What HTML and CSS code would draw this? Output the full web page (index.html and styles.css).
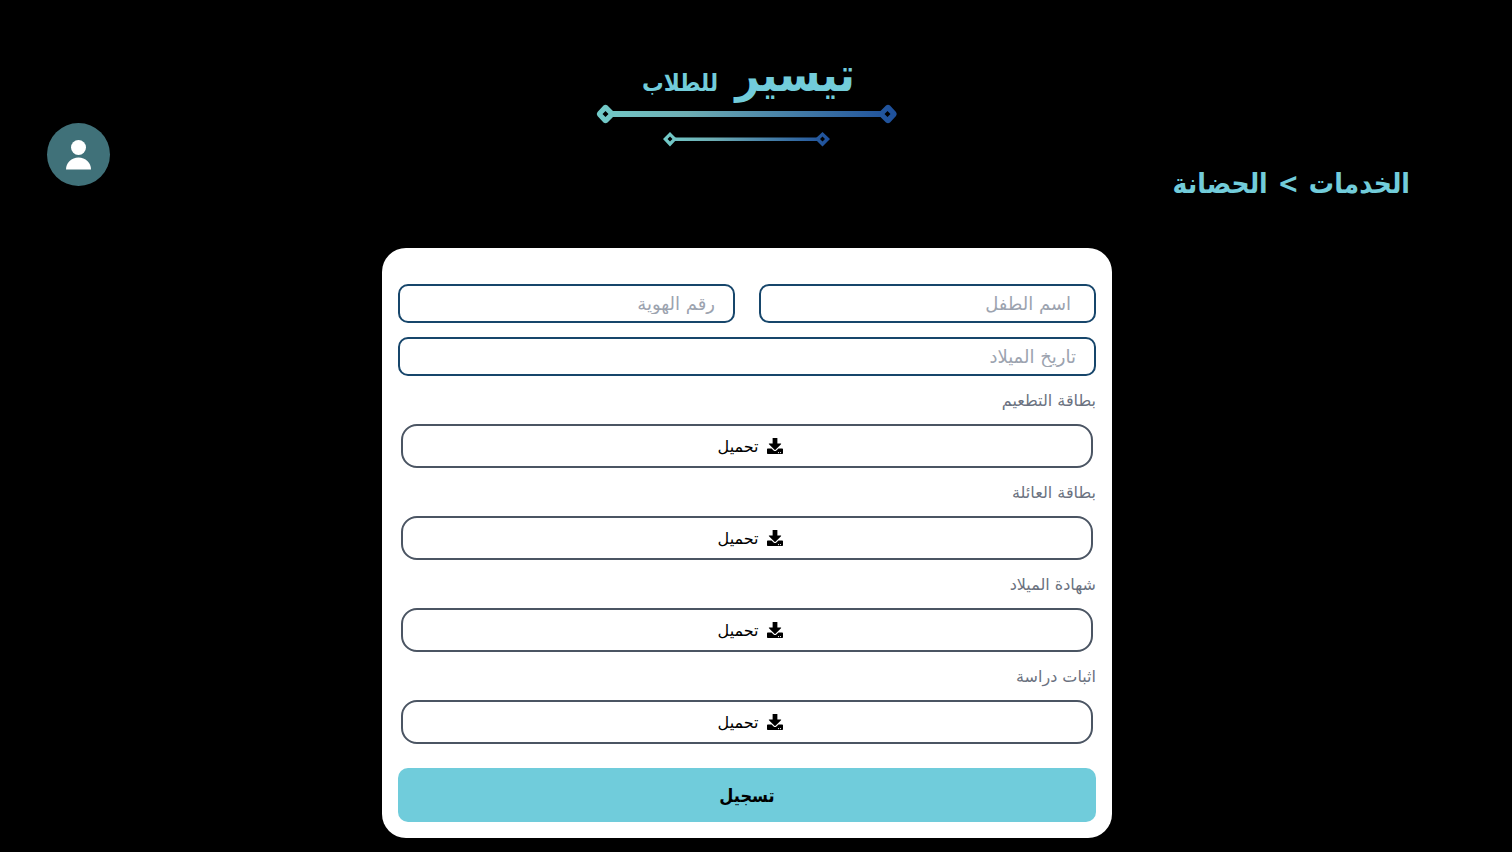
FILE: index.html
```
<!DOCTYPE html>
<html lang="ar" dir="rtl">
<head>
<meta charset="utf-8">
<meta name="viewport" content="width=device-width, initial-scale=1">
<title>الحضانة</title>
<link rel="stylesheet" href="styles.css">
</head>
<body>
<div class="page">
  <header class="header">
    <nav class="breadcrumb" aria-label="المسار">
      <a href="#services">الخدمات</a>
      <span>&gt;</span>
      <a href="#nursery">الحضانة</a>
    </nav>
    <svg class="logo" viewBox="-3 0 320 130" role="img" aria-label="تيسير للطلاب">
      <defs>
        <linearGradient id="line" gradientUnits="userSpaceOnUse" x1="7" y1="0" x2="307" y2="0">
          <stop offset="0" stop-color="#72cbc9"/>
          <stop offset="0.3" stop-color="#6dadb3"/>
          <stop offset="1" stop-color="#1d4f9b"/>
        </linearGradient>
        <linearGradient id="short-line" gradientUnits="userSpaceOnUse" x1="73" y1="0" x2="240" y2="0">
          <stop offset="0" stop-color="#72cbc9"/>
          <stop offset="0.3" stop-color="#6dadb3"/>
          <stop offset="1" stop-color="#1d4f9b"/>
        </linearGradient>
      </defs>
      <text class="logo-main" x="205" y="61" text-anchor="middle">تيسير</text>
      <text class="logo-sub" x="90" y="61" text-anchor="middle">للطلاب</text>
      <g fill="url(#line)">
        <path d="M22 81H291V87H22z"/>
        <path fill-rule="evenodd" d="M13.500 75.500Q15.500 74 17.500 75.500L24 82Q25.500 84 24 86L17.500 92.500Q15.500 94 13.500 92.500L7.500 86Q6 84 7.500 82zM15.500 81L12.500 84L15.500 87L18.500 84z"/>
        <path fill-rule="evenodd" d="M296 75.500Q298 74 300 75.500L306 82Q307.500 84 306 86L300 92.500Q298 94 296 92.500L289.500 86Q288 84 289.500 82zM297.500 81L294.500 84L297.500 87L300.500 84z"/>
      </g>
      <g fill="url(#short-line)">
        <path d="M85 107.500H227V111H85z"/>
        <path fill-rule="evenodd" d="M80 102L87 109L80 116.500L73 109zM80 106.500L77.500 109L80 111.500L82.500 109z"/>
        <path fill-rule="evenodd" d="M232.500 102L240 109L232.500 116.500L225 109zM232.500 106.500L230 109L232.500 111.500L235 109z"/>
      </g>
    </svg>
    <button class="avatar" type="button" aria-label="الحساب">
      <svg viewBox="0 0 26 30" aria-hidden="true"><circle cx="12.500" cy="7.500" r="7.500"/><path d="M0 29.500C0 22.500 5.500 17.500 12.500 17.500S25 22.500 25 29.500z"/></svg>
    </button>
  </header>
  <main>
    <form class="card">
      <div class="fields">
        <input class="field field-name" type="text" placeholder="اسم الطفل" aria-label="اسم الطفل">
        <input class="field" type="text" placeholder="رقم الهوية" aria-label="رقم الهوية">
        <input class="field field-wide" type="text" placeholder="تاريخ الميلاد" aria-label="تاريخ الميلاد">
      </div>
      <div class="upload">
        <label for="vaccine">بطاقة التطعيم</label>
        <button class="upload-button" id="vaccine" type="button"><svg class="icon" viewBox="0 0 512 512" aria-hidden="true"><use href="#download"/></svg>تحميل</button>
      </div>
      <div class="upload">
        <label for="family">بطاقة العائلة</label>
        <button class="upload-button" id="family" type="button"><svg class="icon" viewBox="0 0 512 512" aria-hidden="true"><use href="#download"/></svg>تحميل</button>
      </div>
      <div class="upload">
        <label for="birth">شهادة الميلاد</label>
        <button class="upload-button" id="birth" type="button"><svg class="icon" viewBox="0 0 512 512" aria-hidden="true"><use href="#download"/></svg>تحميل</button>
      </div>
      <div class="upload">
        <label for="study">اثبات دراسة</label>
        <button class="upload-button" id="study" type="button"><svg class="icon" viewBox="0 0 512 512" aria-hidden="true"><use href="#download"/></svg>تحميل</button>
      </div>
      <button class="submit" type="submit">تسجيل</button>
    </form>
  </main>
</div>
<svg class="symbols" aria-hidden="true">
  <symbol id="download" viewBox="0 0 512 512"><path d="M180 0h152v176h108c14 0 18 14 8 24L272 376c-9 9-23 9-32 0L64 200c-10-10-6-24 8-24H180V0zm332 360v128c0 13.300-10.700 24-24 24H24c-13.300 0-24-10.700-24-24V360c0-13.300 10.700-24 24-24h122l65 65c25 25 65 25 90 0l65-65H488c13.300 0 24 10.700 24 24zm-124 104c0-11-9-20-20-20s-20 9-20 20 9 20 20 20 20-9 20-20zm64 0c0-11-9-20-20-20s-20 9-20 20 9 20 20 20 20-9 20-20z"/></symbol>
</svg>
</body>
</html>
```
FILE: styles.css
```
* { box-sizing: border-box; }
body {
  margin: 0;
  background: #000;
  font-family: "DejaVu Sans", sans-serif;
}
button, input { font-family: inherit; }
.page { padding: 30px 18px 14px 0; }
.header {
  display: grid;
  grid-template-columns: 1fr 320px 1fr;
  align-items: start;
  min-height: 218px;
}
.logo { width: 320px; height: 130px; }
.logo-main, .logo-sub {
  fill: #72ccda;
  font-family: "DejaVu Sans Condensed", "DejaVu Sans", sans-serif;
  font-weight: 700;
}
.logo-main { font-size: 47px; }
.logo-sub { font-size: 24px; }
.breadcrumb {
  display: flex;
  gap: 10px;
  padding: 134px 84px 0 0;
  color: #72ccda;
  font-family: "DejaVu Sans Condensed", "DejaVu Sans", sans-serif;
  font-size: 28px;
  font-weight: 700;
  line-height: 40px;
}
.breadcrumb a { color: inherit; text-decoration: none; }
.avatar {
  display: grid;
  place-items: center;
  justify-self: end;
  width: 63px;
  height: 63px;
  margin: 93px 0 0 47px;
  padding: 0;
  border: 0;
  border-radius: 50%;
  background: #407179;
}
.avatar svg { width: 26px; height: 30px; fill: #fff; }
.card {
  display: flex;
  flex-direction: column;
  width: 100%;
  max-width: 730px;
  margin: 0 auto;
  padding: 36px 16px 16px;
  border-radius: 24px;
  background: #fff;
}
.fields {
  display: grid;
  grid-template-columns: 1fr 1fr;
  gap: 14px 24px;
  margin-bottom: 13px;
}
.field {
  width: 100%;
  height: 39px;
  padding: 0 18px;
  border: 2px solid #17466b;
  border-radius: 10px;
  background: #fff;
  color: #111827;
  font-size: 18px;
}
.field-name { padding-right: 23px; }
.field-wide { grid-column: 1 / -1; }
.field::placeholder { color: #9ca3af; opacity: 1; }
.upload { display: flex; flex-direction: column; margin-bottom: 13px; }
.upload label {
  margin-bottom: 11px;
  color: #6b7280;
  font-size: 16px;
  line-height: 24px;
}
.upload-button {
  display: flex;
  align-items: center;
  justify-content: center;
  gap: 8px;
  height: 44px;
  margin: 0 3px;
  padding: 0 0 0 6px;
  border: 2px solid #4b5563;
  border-radius: 16px;
  background: #fff;
  color: #000;
  font-size: 16px;
}
.icon { width: 16px; height: 16px; }
.submit {
  height: 54px;
  margin-top: 11px;
  border: 0;
  border-radius: 10px;
  background: #70ccdb;
  color: #000;
  font-family: "DejaVu Sans Condensed", "DejaVu Sans", sans-serif;
  font-size: 18px;
  font-weight: 700;
}
.symbols { display: none; }
```
